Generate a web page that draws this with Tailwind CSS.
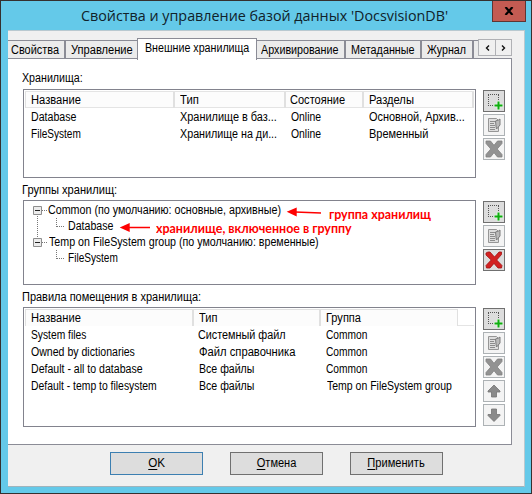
<!DOCTYPE html>
<html lang="ru">
<head>
<meta charset="utf-8">
<title>Свойства и управление базой данных</title>
<script src="https://cdn.jsdelivr.net/npm/@tailwindcss/browser@4"></script>
</head>
<body class="h-[494px] w-[532px] overflow-hidden font-['Liberation_Sans',sans-serif] text-[12px] leading-[17px] text-black">
<svg class="hidden">
  <symbol id="add" viewBox="0 0 20 20">
    <path d="M4 3.500h11M4 14.500h8M4.500 4v11M14.500 4v6" fill="none" stroke="#555" stroke-dasharray="1 1"/>
    <path d="M14.500 10v9M10 14.500h9" stroke="#e4f3e4" stroke-width="3.500"/>
    <path d="M14.500 10.500v8M10.500 14.500h8" stroke="#0fae0f" stroke-width="2"/>
  </symbol>
  <symbol id="edit" viewBox="0 0 20 20">
    <path d="M4.500 3.500h8l2 2v11h-10z" fill="#dedede" stroke="#969696"/>
    <path d="M6 6.500h5M6 8.500h4M6 10.500h5M6 12.500h5M6 14.500h5" stroke="#8c8c8c"/>
    <path d="M11.500 6l3-1 1.500-1V10l-2.500 3-1 1-.5-3z" fill="#bababa" stroke="#7d7d7d"/>
  </symbol>
  <symbol id="del" viewBox="0 0 20 20">
    <path d="M2 2h4.500L10 6.300 13.500 2H18v2.500L13.200 10 18 15.500V18h-4.500L10 13.700 6.500 18H2v-2.500L6.800 10 2 4.500z" fill="#929292" stroke="#828282" stroke-width=".8"/>
  </symbol>
  <symbol id="delred" viewBox="0 0 20 20">
    <path d="M2 3l2-1h2l4.500 5L15 2h2.500v2.500L12.700 10l5.300 5.500-.5 2.500H14l-4-4.600L6 18H2.500L2 15.500 7.200 10 2 5z" fill="#d32222" stroke="#a31212" stroke-width=".8"/>
  </symbol>
  <symbol id="up" viewBox="0 0 20 20">
    <path d="M10 4l6 6v1h-3.500v5h-5v-5H4v-1z" fill="#8a8a8a" stroke="#747474" stroke-width=".8"/>
  </symbol>
  <symbol id="down" viewBox="0 0 20 20">
    <path d="M10 16.500l6-6v-1h-3.500V4h-5v5.500H4v1z" fill="#8a8a8a" stroke="#747474" stroke-width=".8"/>
  </symbol>
</svg>

<div class="flex h-[494px] w-[532px] flex-col whitespace-nowrap border border-[#35302f] bg-[#64c9e9]">
  <header class="flex h-[29px] shrink-0">
    <h1 class="w-[491px] pl-[80px] pt-[3px] font-['Open_Sans',sans-serif] text-[15px] leading-[22px] text-[#10222a]"><span class="inline-block origin-left scale-x-[.955]">Свойства и управление базой данных 'DocsvisionDB'</span></h1>
    <button class="flex h-[21px] w-[34px] shrink-0 items-center justify-center border border-t-0 border-[#5f3533] bg-[#c35b52]">
      <svg class="h-[8px] w-[10px]" viewBox="0 0 10 8"><path d="M1.500 0l7 8M8.500 0l-7 8" stroke="#000" stroke-width="2.200"/></svg>
    </button>
  </header>

  <main class="ml-[7px] flex h-[457px] w-[517px] shrink-0 flex-col border-y border-r border-t-[#b9c9d0] border-r-[#b9c9d0] border-b-[#9fb4bd] bg-[#f0f0f0]">
    <nav class="mt-[9px] flex h-[18px] shrink-0 leading-[19px]">
      <div class="w-[58px] border-r-2 border-t border-[#8b8c96] bg-[#ebebeb] pl-[3px]"><span class="inline-block origin-left scale-x-[.91]">Свойства</span></div>
      <div class="w-[71px] border-t border-[#8b8c96] bg-[#ebebeb] pl-[5px]"><span class="inline-block origin-left scale-x-[.925]">Управление</span></div>
      <div class="z-10 -mt-[2px] h-[22px] w-[120px] border-x border-t border-[#8b8c96] bg-white pl-[7px]"><span class="inline-block origin-left scale-x-[.89]">Внешние хранилища</span></div>
      <div class="w-[89px] border-r-2 border-t border-[#8b8c96] bg-[#ebebeb] pl-[4px]"><span class="inline-block origin-left scale-x-[.895]">Архивирование</span></div>
      <div class="w-[76px] border-r-2 border-t border-[#8b8c96] bg-[#ebebeb] pl-[5px]"><span class="inline-block origin-left scale-x-[.9]">Метаданные</span></div>
      <div class="w-[52px] border-r-2 border-t border-[#8b8c96] bg-[#ebebeb] pl-[5px]"><span class="inline-block origin-left scale-x-[.89]">Журнал</span></div>
      <div class="w-[4px] border-t border-[#8b8c96] bg-[#ebebeb]"></div>
      <div class="-mt-px flex h-[17px] w-[34px] border border-[#b0b1b5] bg-[#f0f0f0]">
        <div class="flex w-[16px] items-center justify-center"><svg class="h-[6px] w-[5px]" viewBox="0 0 5 6"><path d="M4 .5L1.500 3 4 5.500" fill="none" stroke="#111" stroke-width="1.400"/></svg></div>
        <div class="flex w-[16px] items-center justify-center border-l border-[#b0b1b5]"><svg class="h-[6px] w-[5px]" viewBox="0 0 5 6"><path d="M1 .5L3.500 3 1 5.500" fill="none" stroke="#111" stroke-width="1.400"/></svg></div>
      </div>
    </nav>

    <div class="flex h-[387px] w-[504px] shrink-0 flex-col border-y border-r border-[#8b8c96] bg-white pl-[15px]">
      <section class="mt-[11px] flex h-[108px] shrink-0">
        <div class="w-[453px]">
          <div class="-ml-px h-[17px]"><span class="inline-block origin-left scale-x-[.89]">Хранилища:</span></div>
          <div class="mt-[2px] h-[89px] border border-[#82838d] px-px pt-px">
            <div class="grid h-[17px] grid-cols-[150px_111px_78px_110px] border-y border-[#e4e4e4] bg-[#fcfcfc] leading-[16px]">
              <div class="border-l border-r-2 border-[#e0e0e0] pl-[5px]"><span class="inline-block origin-left scale-x-[.93]">Название</span></div>
              <div class="border-r-2 border-[#e0e0e0] pl-[5px]"><span class="inline-block origin-left scale-x-[.94]">Тип</span></div>
              <div class="border-r-2 border-[#e0e0e0] pl-[4px]"><span class="inline-block origin-left scale-x-[.92]">Состояние</span></div>
              <div class="border-r-2 border-[#e0e0e0] pl-[5px]"><span class="inline-block origin-left scale-x-[.93]">Разделы</span></div>
            </div>
            <div class="grid grid-cols-[150px_111px_78px_110px] pt-px">
              <div class="pl-[6px]"><span class="inline-block origin-left scale-x-[.885]">Database</span></div>
              <div class="pl-[5px]"><span class="inline-block origin-left scale-x-[.91]">Хранилище в баз...</span></div>
              <div class="pl-[5px]"><span class="inline-block origin-left scale-x-[.865]">Online</span></div>
              <div class="pl-[5px]"><span class="inline-block origin-left scale-x-[.91]">Основной, Архив...</span></div>
              <div class="pl-[6px]"><span class="inline-block origin-left scale-x-[.84]">FileSystem</span></div>
              <div class="pl-[5px]"><span class="inline-block origin-left scale-x-[.895]">Хранилище на ди...</span></div>
              <div class="pl-[5px]"><span class="inline-block origin-left scale-x-[.865]">Online</span></div>
              <div class="pl-[5px]"><span class="inline-block origin-left scale-x-[.915]">Временный</span></div>
            </div>
          </div>
        </div>
        <div class="ml-[7px] mt-[20px] flex flex-col gap-[2px]">
          <button class="size-[22px] border border-[#707070] bg-[#dddddd]"><svg class="size-[20px]"><use href="#add"/></svg></button>
          <button class="size-[22px] border border-[#adb2b5] bg-[#f4f4f4]"><svg class="size-[20px]"><use href="#edit"/></svg></button>
          <button class="size-[22px] border border-[#adb2b5] bg-[#f4f4f4]"><svg class="size-[20px]"><use href="#del"/></svg></button>
        </div>
      </section>

      <section class="mt-[4px] flex h-[103px] shrink-0">
        <div class="w-[453px]">
          <div class="-ml-px h-[17px]"><span class="inline-block origin-left scale-x-[.925]">Группы хранилищ:</span></div>
          <div class="relative mt-px h-[85px] border border-[#82838d] pt-px leading-[16px]">
            <svg class="absolute left-0 top-0 h-[83px] w-[451px]" viewBox="0 0 451 83">
              <path d="M13.500 15v22M32.500 17v9M32.500 49v9" stroke="#777" stroke-dasharray="1 1"/>
              <path d="M18 9.500h5M33 25.500h8M18 41.500h5M33 57.500h8" stroke="#777" stroke-dasharray="1 1"/>
              <g fill="#ececec" stroke="#8d8d8d"><path d="M9.500 5.500h8v8h-8zM9.500 37.500h8v8h-8z"/></g>
              <path d="M11 9.500h5M11 41.500h5" stroke="#222"/>
              <g fill="#fe0000" stroke="#fe0000">
                <path d="M271 11l26 1M104 26.500h22" stroke-width="1.600"/>
                <path d="M262.700 10.700l10-4.200v9zM95.700 26.500l10-4.500v9z" stroke="none"/>
              </g>
            </svg>
            <div class="pl-[24px]"><span class="inline-block origin-left scale-x-[.893]">Common (по умолчанию: основные, архивные)</span></div>
            <div class="pl-[44px]"><span class="inline-block origin-left scale-x-[.885]">Database</span></div>
            <div class="pl-[25px]"><span class="inline-block origin-left scale-x-[.89]">Temp on FileSystem group (по умолчанию: временные)</span></div>
            <div class="pl-[44px]"><span class="inline-block origin-left scale-x-[.84]">FileSystem</span></div>
            <span class="absolute left-[305px] top-[5px] origin-left scale-x-[.957] font-['Lato',sans-serif] text-[13px] font-bold text-[#fe0000]">группа хранилищ</span>
            <span class="absolute left-[132px] top-[19px] origin-left scale-x-[.957] font-['Lato',sans-serif] text-[13px] font-bold text-[#fe0000]">хранилище, включенное в группу</span>
          </div>
        </div>
        <div class="ml-[7px] mt-[19px] flex flex-col gap-[2px]">
          <button class="size-[22px] border border-[#707070] bg-[#dddddd]"><svg class="size-[20px]"><use href="#add"/></svg></button>
          <button class="size-[22px] border border-[#adb2b5] bg-[#f4f4f4]"><svg class="size-[20px]"><use href="#edit"/></svg></button>
          <button class="size-[22px] border border-[#707070] bg-[#dddddd]"><svg class="size-[20px]"><use href="#delred"/></svg></button>
        </div>
      </section>

      <section class="mt-[4px] flex h-[138px] shrink-0">
        <div class="w-[453px]">
          <div class="-ml-px h-[17px]"><span class="inline-block origin-left scale-x-[.915]">Правила помещения в хранилища:</span></div>
          <div class="mt-px h-[120px] border border-[#82838d] px-px pt-px">
            <div class="border-b border-[#e4e4e4]">
              <div class="grid h-[16px] grid-cols-[169px_127px_137px] leading-[16px]">
                <div class="border-l border-r-2 border-t border-[#e0e0e0] bg-[#fcfcfc] pl-[5px]"><span class="inline-block origin-left scale-x-[.93]">Название</span></div>
                <div class="border-r-2 border-t border-[#e0e0e0] bg-[#fcfcfc] pl-[5px]"><span class="inline-block origin-left scale-x-[.92]">Тип</span></div>
                <div class="border-r border-t border-[#e0e0e0] bg-[#fcfcfc] pl-[5px]"><span class="inline-block origin-left scale-x-[.92]">Группа</span></div>
              </div>
            </div>
            <div class="grid grid-cols-[169px_127px_137px] pt-px">
              <div class="pl-[6px]"><span class="inline-block origin-left scale-x-[.855]">System files</span></div>
              <div class="pl-[4px]"><span class="inline-block origin-left scale-x-[.9]">Системный файл</span></div>
              <div class="pl-[5px]"><span class="inline-block origin-left scale-x-[.85]">Common</span></div>
              <div class="pl-[6px]"><span class="inline-block origin-left scale-x-[.88]">Owned by dictionaries</span></div>
              <div class="pl-[5px]"><span class="inline-block origin-left scale-x-[.935]">Файл справочника</span></div>
              <div class="pl-[5px]"><span class="inline-block origin-left scale-x-[.85]">Common</span></div>
              <div class="pl-[6px]"><span class="inline-block origin-left scale-x-[.88]">Default - all to database</span></div>
              <div class="pl-[5px]"><span class="inline-block origin-left scale-x-[.88]">Все файлы</span></div>
              <div class="pl-[5px]"><span class="inline-block origin-left scale-x-[.85]">Common</span></div>
              <div class="pl-[6px]"><span class="inline-block origin-left scale-x-[.865]">Default - temp to filesystem</span></div>
              <div class="pl-[5px]"><span class="inline-block origin-left scale-x-[.88]">Все файлы</span></div>
              <div class="pl-[6px]"><span class="inline-block origin-left scale-x-[.875]">Temp on FileSystem group</span></div>
            </div>
          </div>
        </div>
        <div class="ml-[7px] mt-[19px] flex flex-col gap-[2px]">
          <button class="size-[22px] border border-[#707070] bg-[#dddddd]"><svg class="size-[20px]"><use href="#add"/></svg></button>
          <button class="size-[22px] border border-[#adb2b5] bg-[#f4f4f4]"><svg class="size-[20px]"><use href="#edit"/></svg></button>
          <button class="size-[22px] border border-[#adb2b5] bg-[#f4f4f4]"><svg class="size-[20px]"><use href="#del"/></svg></button>
          <button class="size-[22px] border border-[#adb2b5] bg-[#f4f4f4]"><svg class="size-[20px]"><use href="#up"/></svg></button>
          <button class="size-[22px] border border-[#adb2b5] bg-[#f4f4f4]"><svg class="size-[20px]"><use href="#down"/></svg></button>
        </div>
      </section>
    </div>

    <footer class="mt-[7px] flex gap-[27px] pl-[102px]">
      <button class="h-[23px] w-[93px] border border-[#3c7fb1] bg-[#dddddd]"><span class="inline-block scale-x-[.97]"><span class="underline underline-offset-2">O</span>K</span></button>
      <button class="h-[23px] w-[93px] border border-[#707070] bg-[#dddddd]"><span class="inline-block scale-x-[.92]"><span class="underline underline-offset-2">О</span>тмена</span></button>
      <button class="h-[23px] w-[93px] border border-[#707070] bg-[#dddddd]"><span class="inline-block scale-x-[.925]"><span class="underline underline-offset-2">П</span>рименить</span></button>
    </footer>
  </main>
</div>
</body>
</html>
